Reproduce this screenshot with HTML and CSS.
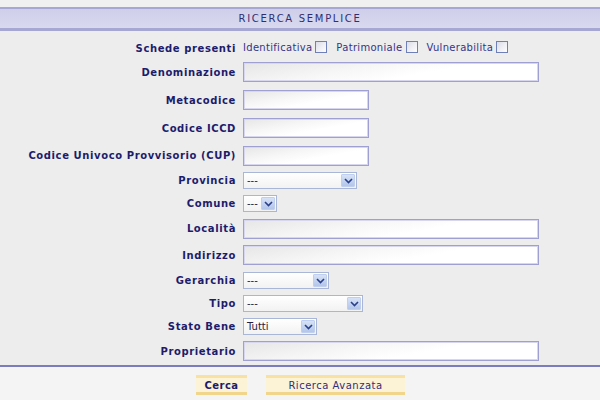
FILE: index.html
```html
<!DOCTYPE html>
<html lang="it">
<head>
<meta charset="utf-8">
<title>Ricerca Semplice</title>
<link rel="stylesheet" href="styles.css">
</head>
<body>
<div class="page">
  <div class="titlebar">RICERCA SEMPLICE</div>
  <div class="form">
    <div class="label">Schede presenti</div>
    <div class="checks">
      <span class="chk">Identificativa <span class="box"></span></span>
      <span class="chk">Patrimoniale <span class="box"></span></span>
      <span class="chk">Vulnerabilita <span class="box"></span></span>
    </div>

    <div class="label">Denominazione</div>
    <div><input class="txt w-xl sp" type="text"></div>

    <div class="label">Metacodice</div>
    <div><input class="txt w-s sp" type="text"></div>

    <div class="label">Codice ICCD</div>
    <div><input class="txt w-s sp" type="text"></div>

    <div class="label">Codice Univoco Provvisorio (CUP)</div>
    <div><input class="txt w-s sp-top" type="text"></div>

    <div class="label">Provincia</div>
    <div><div class="sel w-prov"><span class="val">---</span><span class="arr"><svg width="9" height="6" viewBox="0 0 9 6"><path d="M1 1 L4.5 4.5 L8 1" fill="none" stroke="#2a3f8a" stroke-width="1.6"/></svg></span></div></div>

    <div class="label">Comune</div>
    <div><div class="sel w-com"><span class="val">---</span><span class="arr"><svg width="9" height="6" viewBox="0 0 9 6"><path d="M1 1 L4.5 4.5 L8 1" fill="none" stroke="#2a3f8a" stroke-width="1.6"/></svg></span></div></div>

    <div class="label">Località</div>
    <div><input class="txt w-xl sp-top" type="text"></div>

    <div class="label">Indirizzo</div>
    <div><input class="txt w-xl sp-bottom" type="text"></div>

    <div class="label">Gerarchia</div>
    <div><div class="sel w-ger"><span class="val">---</span><span class="arr"><svg width="9" height="6" viewBox="0 0 9 6"><path d="M1 1 L4.5 4.5 L8 1" fill="none" stroke="#2a3f8a" stroke-width="1.6"/></svg></span></div></div>

    <div class="label">Tipo</div>
    <div><div class="sel w-tipo"><span class="val">---</span><span class="arr"><svg width="9" height="6" viewBox="0 0 9 6"><path d="M1 1 L4.5 4.5 L8 1" fill="none" stroke="#2a3f8a" stroke-width="1.6"/></svg></span></div></div>

    <div class="label">Stato Bene</div>
    <div><div class="sel w-stato"><span class="val">Tutti</span><span class="arr"><svg width="9" height="6" viewBox="0 0 9 6"><path d="M1 1 L4.5 4.5 L8 1" fill="none" stroke="#2a3f8a" stroke-width="1.6"/></svg></span></div></div>

    <div class="label">Proprietario</div>
    <div><input class="txt w-xl" type="text"></div>
  </div>
  <div class="actions">
    <button class="btn btn-cerca" type="button">Cerca</button>
    <button class="btn btn-adv" type="button">Ricerca Avanzata</button>
  </div>
</div>
</body>
</html>
```
FILE: styles.css
```css
html, body {
  margin: 0;
  padding: 0;
}
body {
  background: #f0f0f0;
  font-family: "DejaVu Sans", Verdana, sans-serif;
  width: 600px;
  height: 400px;
  overflow: hidden;
}
.page {
  padding-top: 7px;
}
.titlebar {
  height: 19px;
  line-height: 19px;
  border-top: 2px solid #a7a7d3;
  border-bottom: 3px solid #a7a7d3;
  background: linear-gradient(#cfcfea, #d8d8ef);
  text-align: center;
  font-size: 10px;
  letter-spacing: 1.7px;
  color: #2f2f70;
}
.form {
  background: #ededed;
  display: grid;
  grid-template-columns: 236px 1fr;
  column-gap: 7px;
  row-gap: 6px;
  align-items: center;
  padding: 10px 0 4px 0;
  border-bottom: 2px solid #7c7cbc;
}
.label {
  text-align: right;
  font-weight: bold;
  font-size: 10px;
  letter-spacing: 0.6px;
  color: #1c1c6c;
}
.checks {
  display: flex;
  align-items: center;
  gap: 9px;
  font-size: 10px;
  letter-spacing: 0.3px;
  color: #34348a;
  margin-bottom: 2px;
}
.chk {
  display: inline-flex;
  align-items: center;
  gap: 3px;
}
.box {
  display: inline-block;
  width: 10px;
  height: 10px;
  border: 1px solid #6f7fb8;
  background: linear-gradient(135deg, #dcdce8, #ffffff);
}
.txt {
  display: block;
  box-sizing: border-box;
  height: 20px;
  margin: 0;
  padding: 0 3px;
  border: 1px solid #9f9fd2;
  box-shadow: inset 0 0 0 1px #d6d6ee;
  background: linear-gradient(170deg, #e6e6e6 0%, #f6f6f6 35%, #ffffff 60%);
  outline: none;
}
.sp { margin: 1px 0; }
.sp-top { margin-top: 1px; }
.sp-bottom { margin-bottom: 1px; }
.w-xl { width: 296px; }
.w-s { width: 126px; }
.sel {
  box-sizing: border-box;
  height: 17px;
  display: flex;
  align-items: center;
  border: 1px solid #a9b6d6;
  background: linear-gradient(#ffffff, #f2f2f2);
  font-size: 10px;
  color: #222244;
}
.sel .val {
  flex: 1;
  padding-left: 3px;
}
.sel .arr {
  width: 14px;
  height: 13px;
  margin-right: 1px;
  display: flex;
  align-items: center;
  justify-content: center;
  border-radius: 1px;
  background: linear-gradient(#d6e2f6, #b3c6ea);
  border: 1px solid #c0cfee;
  box-sizing: border-box;
}
.w-prov { width: 114px; }
.w-com { width: 34px; }
.w-ger { width: 86px; }
.w-tipo { width: 120px; }
.w-stato { width: 74px; }
.actions {
  background: #f4f4f4;
  display: flex;
  gap: 19px;
  padding: 8px 0 0 196px;
  height: 40px;
  box-sizing: border-box;
}
.btn {
  margin: 0;
  height: 20px;
  padding: 0;
  border: 0;
  border-top: 3px solid #f7e2a4;
  border-bottom: 3px solid #f0d58a;
  background: #fcf2d6;
  font-family: "DejaVu Sans", Verdana, sans-serif;
  font-size: 10px;
  color: #1c1c6c;
  letter-spacing: 0.5px;
}
.btn-cerca {
  width: 51px;
  font-weight: bold;
}
.btn-adv {
  width: 139px;
  color: #2f2f80;
}
```
